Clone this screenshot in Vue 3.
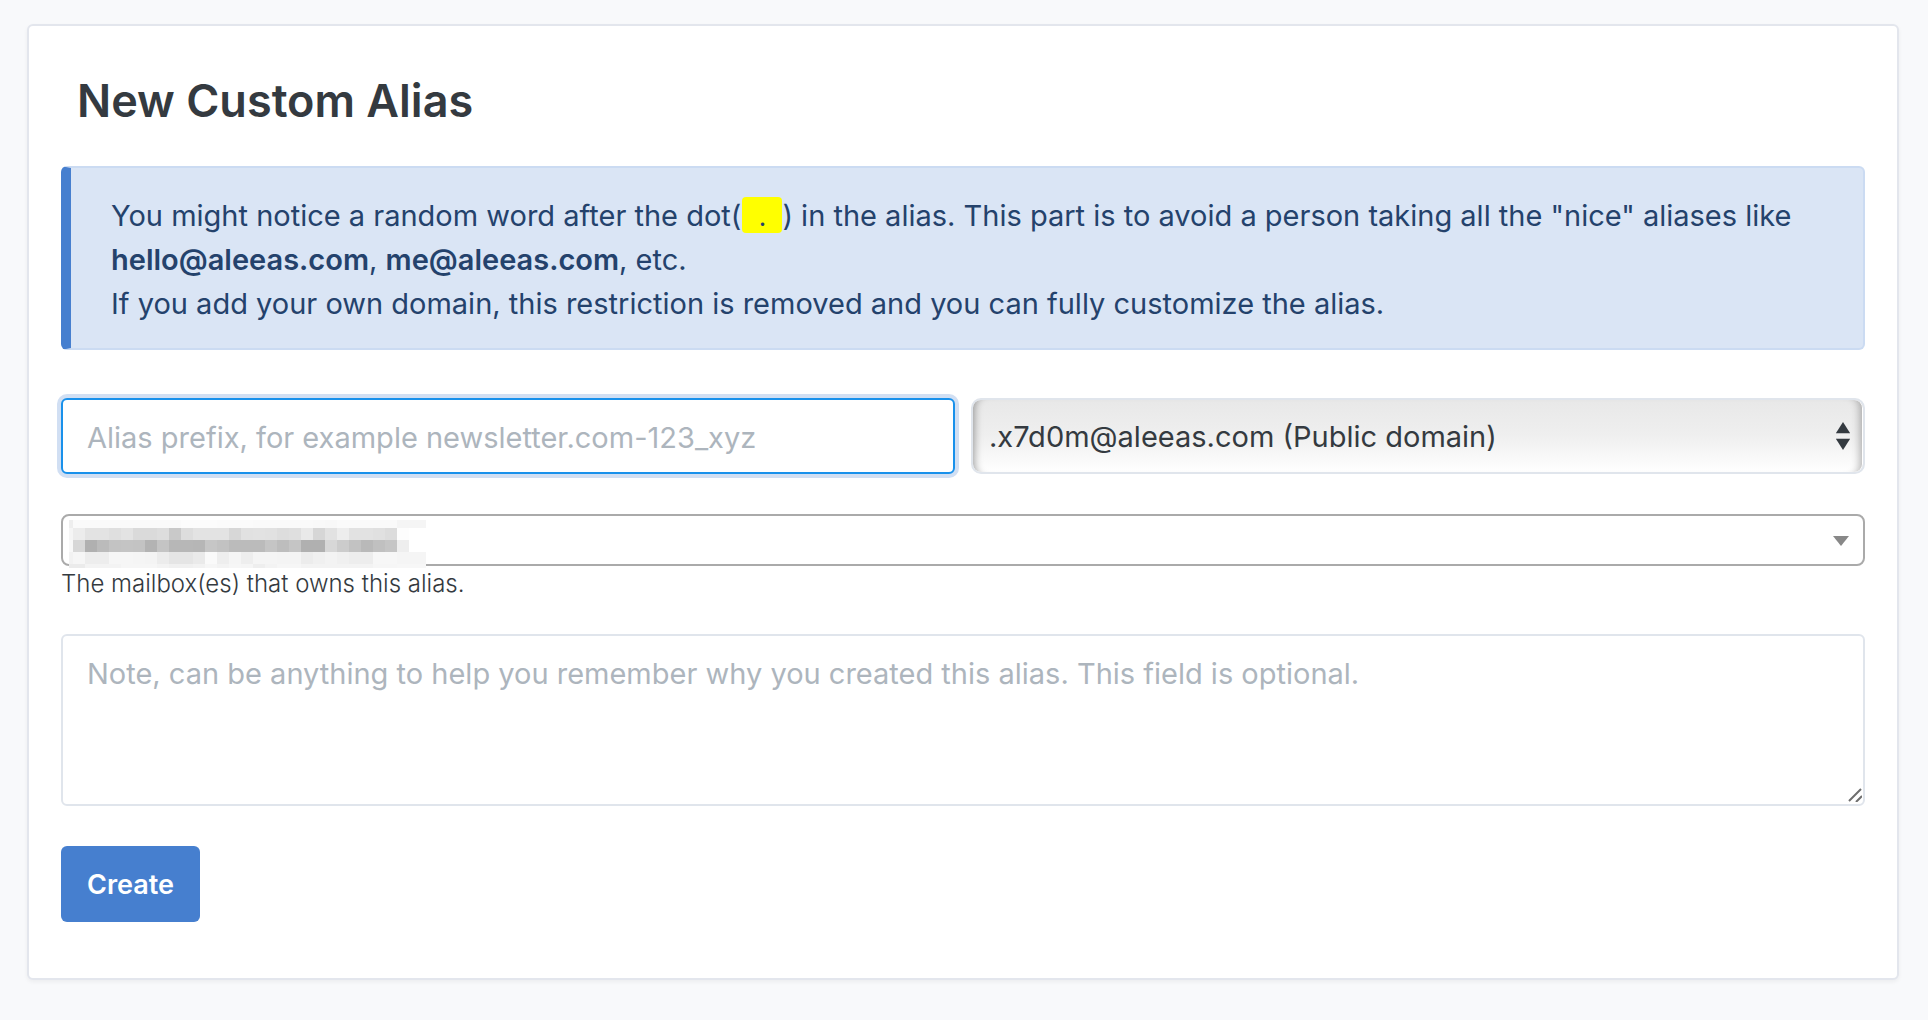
<script setup>
import { ref } from 'vue'

const prefix = ref('')
const note = ref('')
const suffix = ref('public')

// Grey levels of the redaction mosaic, one list per row, left to right.
const levels = [
  { y: 0, h: 8, edge: 'ee', cells: 'fa fa fa fa fa fa fa fa fa fc fc fc fb fb fb fa fa fa fa fa f9 f8 fa fa fa fa fa f5 f5' },
  { y: 8, h: 12, edge: 'f5', cells: 'ec e3 e3 df e3 da da dd c9 dd e3 e3 e3 d7 e1 e2 e1 dd df e9 d6 e2 ed e2 e2 e0 dc fd ff' },
  { y: 20, h: 12, edge: 'f8', cells: 'd7 b0 bb c3 c4 c3 b3 c4 b7 b7 b6 c6 c2 bb bb bb c5 bd c5 b0 b0 d7 cc c2 b9 c0 c5 ee ff' },
  { y: 32, h: 12, edge: 'f2', cells: 'f6 ed ed f6 f6 f5 f4 ec e5 e5 ea fa ee f5 ee f5 f5 f4 f4 ec f0 f3 f0 ed ed f7 f7 f5 f5' },
  { y: 44, h: 4, edge: 'eb', cells: 'eb f3 f3 f3 f6 f6 f6 f3 f0 f0 f2 f6 f3 f6 f5 ee f3 f6 f6 f3 f3 f3 f3 f3 f3 f6 f6 f7 f7' },
]
const mosaic = levels.flatMap(({ y, h, edge, cells }) => [
  { x: 0, y, w: 4, h, fill: '#' + edge.repeat(3) },
  ...cells.split(' ').map((c, i) => ({ x: 4 + i * 12, y, w: i === 28 ? 17 : 12, h, fill: '#' + c.repeat(3) })),
])
</script>

<template>
  <main class="page">
    <section class="card">
      <h1 class="title">New Custom Alias</h1>

      <div class="alert" role="alert">
        You might notice a random word after the dot(<em class="dot">.</em>) in the alias. This part is to avoid a person taking all the "nice" aliases like
        <b>hello@aleeas.com</b>, <b>me@aleeas.com</b>, etc.<br />
        If you add your own domain, this restriction is removed and you can fully customize the alias.
      </div>

      <form class="form" @submit.prevent>
        <div class="row">
          <input v-model="prefix" class="control prefix" type="text" aria-label="Alias prefix" placeholder="Alias prefix, for example newsletter.com-123_xyz" />
          <div class="field">
            <select v-model="suffix" class="control suffix" aria-label="Alias suffix">
              <option value="public">.x7d0m@aleeas.com (Public domain)</option>
            </select>
            <svg class="updown" width="14" height="28" viewBox="0 0 14 28" aria-hidden="true">
              <path d="M7 0L14 11H0Z" fill="#343a40" />
              <path d="M0 11.5H14M0 16.500H14" stroke="#bfbfc2" />
              <path d="M0 17H14L7 28Z" fill="#343a40" />
            </svg>
          </div>
        </div>

        <div class="mailboxes">
          <div class="field">
            <select id="mailbox" class="mailbox">
              <option value=""></option>
            </select>
            <svg class="mosaic" width="357" height="48" viewBox="0 0 357 48" shape-rendering="crispEdges" aria-hidden="true">
              <rect v-for="(c, i) in mosaic" :key="i" :x="c.x" :y="c.y" :width="c.w" :height="c.h" :fill="c.fill" />
            </svg>
            <svg class="caret" width="16" height="10" viewBox="0 0 16 10" aria-hidden="true">
              <path d="M0 0H16L8 10Z" fill="#888" />
            </svg>
          </div>
          <label class="help" for="mailbox">The mailbox(es) that owns this alias.</label>
        </div>

        <div class="field">
          <textarea v-model="note" class="control note" aria-label="Note" placeholder="Note, can be anything to help you remember why you created this alias. This field is optional."></textarea>
          <svg class="grip" width="14" height="14" viewBox="0 0 14 14" aria-hidden="true">
            <path d="M1 13L13 1M8 14L14 8" stroke="#6e6e6e" stroke-width="2" />
          </svg>
        </div>

        <button class="create" type="submit">Create</button>
      </form>
    </section>
  </main>
</template>

<style>
body {
  margin: 0;
  background: #f8f9fb;
}
</style>

<style scoped>
.page {
  padding: 24px 29px 40px 27px;
  font-family: Inter, "Liberation Sans", sans-serif;
  font-size: 29px;
  line-height: 44px;
  color: #343a40;
}
.page * {
  box-sizing: border-box;
}
.card {
  padding: 46px 32px 56px;
  border: 2px solid #e3e6ed;
  border-radius: 6px;
  background: #fff;
  box-shadow: 0 2px 4px rgba(0, 0, 0, 0.05);
}
.title {
  margin: 0 16px 36px;
  font-size: 45px;
  line-height: 58px;
  font-weight: 600;
}
.alert {
  padding: 26px 38px 22px 40px;
  border: 2px solid #cbdbf2;
  border-left: 10px solid #467fcf;
  border-radius: 6px;
  background: #dae5f5;
  color: #24426c;
}
.alert b {
  font-weight: 600;
}
.dot {
  display: inline-block;
  width: 40px;
  margin-left: 1px;
  padding-top: 4px;
  border-radius: 4px;
  background: #ff0;
  font-size: 26px;
  line-height: 32px;
  font-style: normal;
  text-align: center;
}
.form {
  display: flex;
  flex-direction: column;
  gap: 40px;
  margin-top: 48px;
}
.row {
  display: grid;
  grid-template-columns: 1fr 1fr;
  gap: 16px;
}
.field {
  position: relative;
  display: flex;
}
.control {
  width: 100%;
  height: 76px;
  margin: 0;
  padding: 2px 24px 0;
  border: 2px solid #e0e5ec;
  border-radius: 6px;
  outline: none;
  background: #fff;
  color: #343a40;
  font: inherit;
}
.control::placeholder {
  color: #adb5bd;
  opacity: 1;
}
.prefix {
  border-color: #1991eb;
  box-shadow: 0 0 0 4px #d1dff3;
}
.suffix {
  appearance: none;
  padding: 2px 16px 0;
  border-radius: 10px;
  background: linear-gradient(#e8e8e8, #efefef 50%, #fff);
  box-shadow:
    inset -1px 0 0 #fff,
    inset 9px 0 8px -8px rgba(0, 0, 0, 0.4),
    inset -11px 0 8px -8px rgba(0, 0, 0, 0.3);
}
.updown {
  position: absolute;
  top: 24px;
  right: 15px;
  pointer-events: none;
}
.mailbox {
  appearance: none;
  width: 100%;
  height: 52px;
  margin: 0;
  padding: 0 16px;
  border: 2px solid #aaa;
  border-radius: 8px;
  background: #fff;
  font: inherit;
}
.mosaic {
  position: absolute;
  top: 6px;
  left: 8px;
  pointer-events: none;
}
.caret {
  position: absolute;
  top: 22px;
  right: 16px;
  pointer-events: none;
}
.help {
  display: block;
  font-size: 24px;
  line-height: 36px;
  font-weight: 300;
}
.mailboxes {
  margin-bottom: -8px;
}
.note {
  height: 172px;
  padding: 16px 24px;
  resize: vertical;
}
.note::-webkit-resizer {
  background: transparent;
}
.grip {
  position: absolute;
  right: 3px;
  bottom: 4px;
  pointer-events: none;
}
.create {
  align-self: flex-start;
  height: 76px;
  padding: 2px 26px 0;
  border: 0;
  border-radius: 6px;
  background: #467fcf;
  color: #fff;
  font: inherit;
  font-size: 27px;
  font-weight: 600;
}
</style>
